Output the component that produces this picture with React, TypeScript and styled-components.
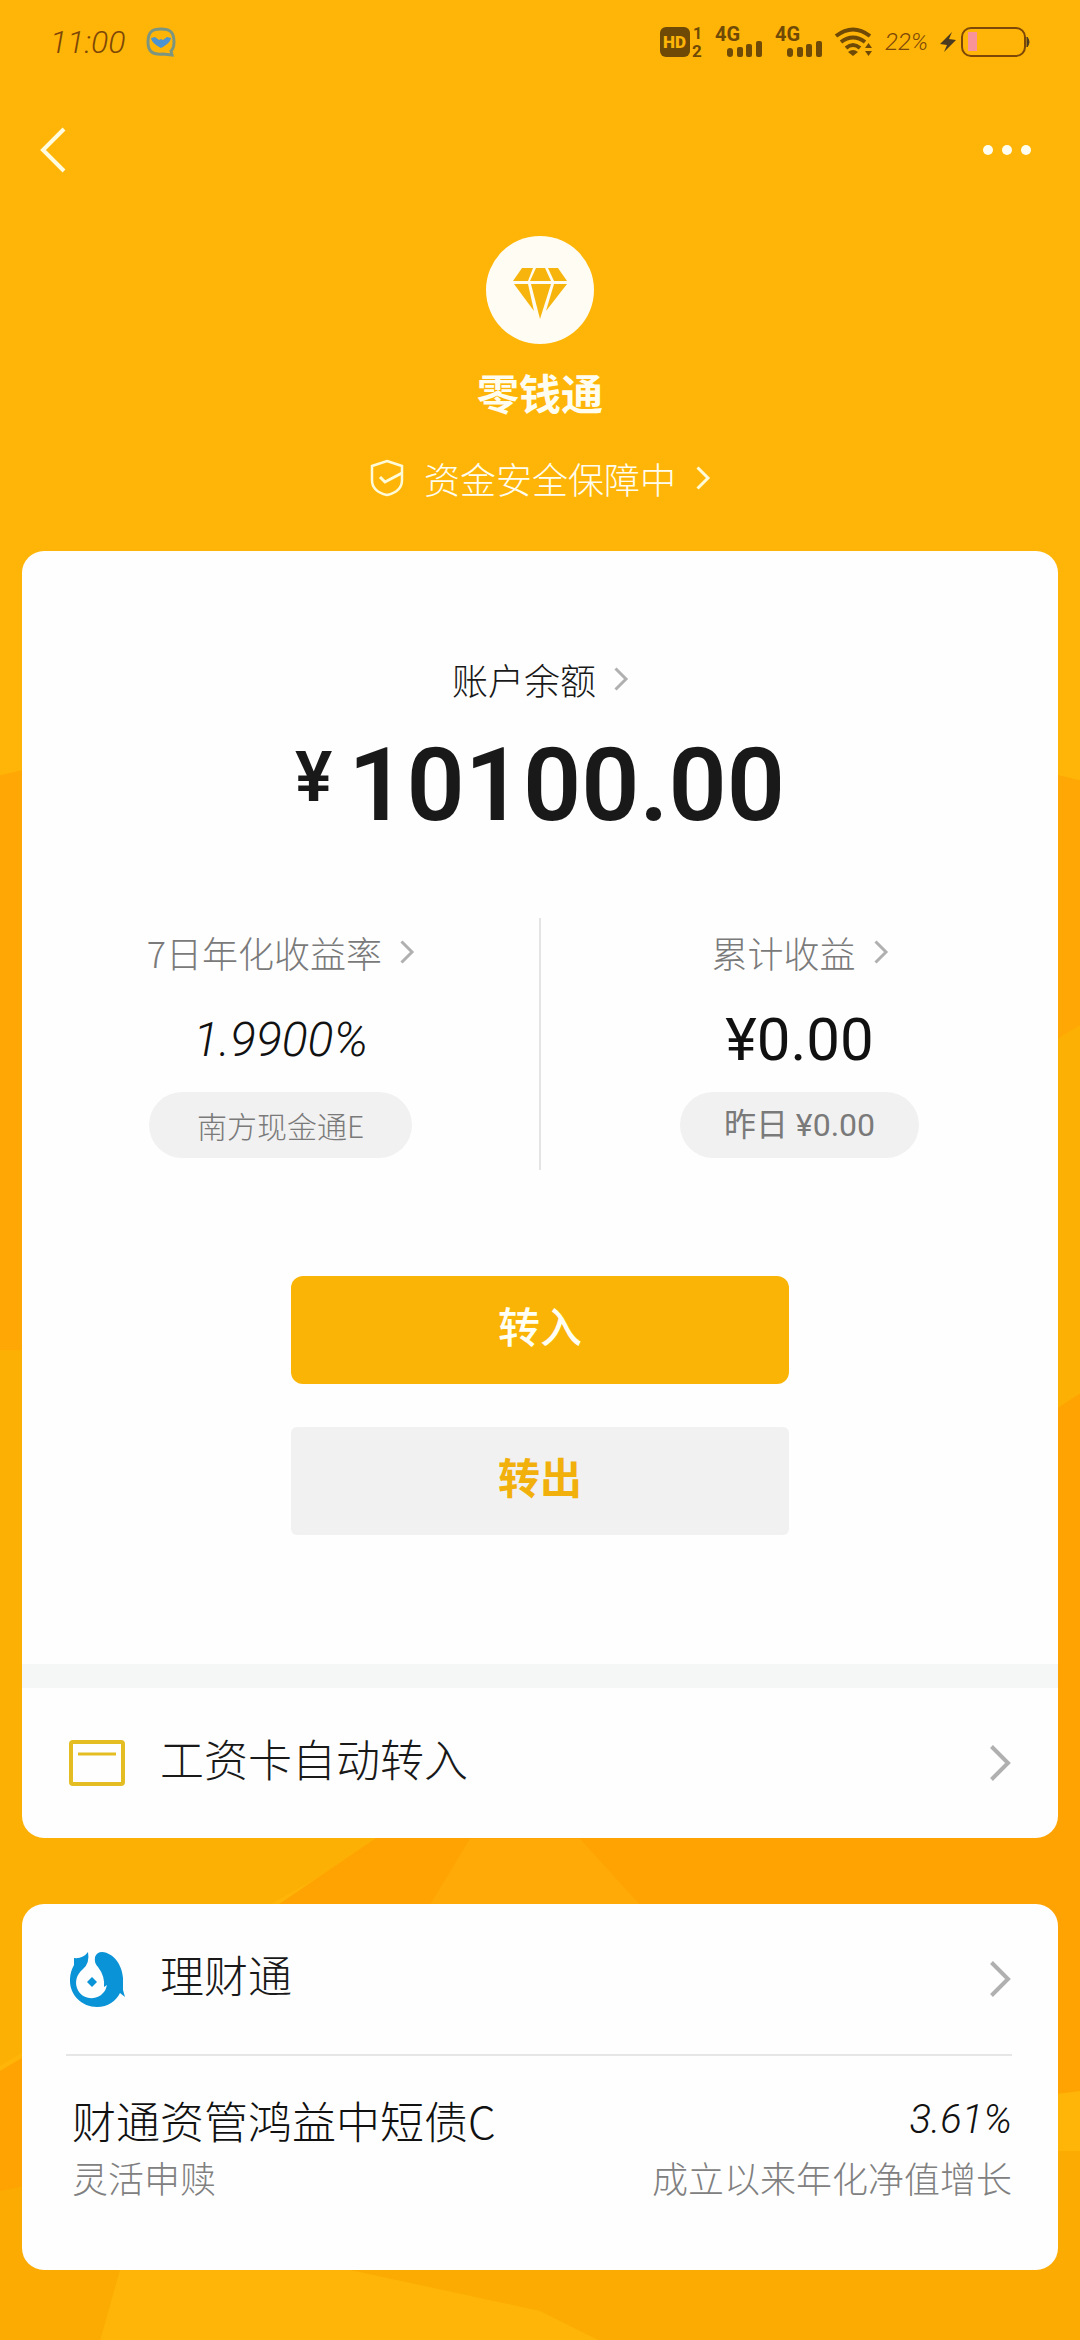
import React from 'react';
import styled, { createGlobalStyle } from 'styled-components';

const GlobalStyle = createGlobalStyle`
  * { box-sizing: border-box; }
  html { background: #ffb507; }
  body {
    margin: 0;
    font-family: Roboto, 'Noto Sans CJK SC', sans-serif;
    color: #191919;
  }
  h1, p { margin: 0; font-weight: inherit; }
  svg { display: block; flex: none; overflow: visible; }
`;

const han = "'Noto Sans CJK SC', sans-serif";
const ink = '#6f4a06';

const Page = styled.div`
  position: relative;
  isolation: isolate;
  min-height: 100vh;
  padding-bottom: 71px;
`;

const Backdrop = styled.svg`
  position: absolute;
  inset: 0;
  z-index: -1;
  width: 100%;
  height: 100%;
`;

const StatusBar = styled.div`
  display: flex;
  align-items: center;
  justify-content: space-between;
  height: 84px;
  padding: 0 50px;
`;

const StatusGroup = styled.div<{ $gap: number }>`
  display: flex;
  align-items: center;
  gap: ${(p) => p.$gap}px;
`;

const StatusText = styled.span<{ $size: number }>`
  font-size: ${(p) => p.$size}px;
  line-height: 40px;
  font-style: italic;
  font-weight: 300;
  color: #7d4708;
`;

const NavBar = styled.nav`
  display: flex;
  align-items: center;
  justify-content: space-between;
  height: 132px;
  padding: 0 48px 0 38px;
`;

const PlainButton = styled.button`
  display: flex;
  align-items: center;
  justify-content: center;
  border: 0;
  padding: 0;
  background: none;
  color: inherit;
  font: inherit;
  cursor: pointer;
`;

const Hero = styled.header`
  display: flex;
  flex-direction: column;
  align-items: center;
  padding: 20px 0 43px;
  color: #fffdf0;
`;

const Title = styled.h1`
  margin-top: 18px;
  font-family: ${han};
  font-size: 42px;
  line-height: 60px;
  font-weight: 700;
`;

const Security = styled(PlainButton)`
  gap: 20px;
  margin-top: 32px;
  font-family: ${han};
  font-size: 36px;
  line-height: 48px;
  font-weight: 300;
  padding-bottom: 6px;
`;

const Stack = styled.main`
  display: flex;
  flex-direction: column;
  gap: 66px;
  padding: 0 22px;
`;

const Card = styled.section`
  border-radius: 22px;
  background: #fefefe;
  overflow: hidden;
`;

const Summary = styled.div`
  display: flex;
  flex-direction: column;
  align-items: center;
  padding: 104px 0 129px;
`;

const Label = styled(PlainButton)<{ $muted?: boolean }>`
  gap: 18px;
  font-family: ${han};
  font-size: 36px;
  line-height: 48px;
  font-weight: 300;
  color: ${(p) => (p.$muted ? '#7a7a7a' : '#191919')};
`;

const Amount = styled.p`
  display: flex;
  align-items: flex-start;
  gap: 16px;
  margin-top: 24px;
  font-weight: 600;
  font-size: 102px;
  line-height: 116px;
`;

const Currency = styled.span`
  font-size: 70px;
  line-height: 100px;
`;

const Stats = styled.div`
  display: grid;
  grid-template-columns: 1fr 2px 1fr;
  width: 100%;
  margin-top: 75px;
`;

const Stat = styled.div`
  display: flex;
  flex-direction: column;
  align-items: center;
  padding: 10px 0 12px;
`;

const Rule = styled.div`
  background: #e4e4e4;
`;

const StatValue = styled.p<{ $slanted?: boolean }>`
  margin-top: 28px;
  line-height: 72px;
  font-size: ${(p) => (p.$slanted ? 48 : 60)}px;
  font-style: ${(p) => (p.$slanted ? 'italic' : 'normal')};
  font-weight: ${(p) => (p.$slanted ? 300 : 400)};
  color: #111;
`;

const Pill = styled.span<{ $fine?: boolean }>`
  margin-top: 16px;
  padding: 0 ${(p) => (p.$fine ? 48 : 44)}px;
  border-radius: 33px;
  background: #f1f1f1;
  color: #7a7a7a;
  font-family: ${(p) => (p.$fine ? han : "Roboto, 'Noto Sans CJK SC', sans-serif")};
  font-size: ${(p) => (p.$fine ? 30 : 32)}px;
  font-weight: ${(p) => (p.$fine ? 300 : 400)};
  line-height: 66px;
`;

const Actions = styled.div`
  display: flex;
  flex-direction: column;
  gap: 43px;
  width: 48%;
  margin-top: 106px;
`;

const Action = styled(PlainButton)<{ $primary?: boolean }>`
  height: 108px;
  padding-bottom: 12px;
  border-radius: ${(p) => (p.$primary ? 12 : 6)}px;
  background: ${(p) => (p.$primary ? '#fab405' : '#f1f1f1')};
  color: ${(p) => (p.$primary ? '#fffff4' : '#f2b00c')};
  font-family: ${han};
  font-size: 42px;
  font-weight: ${(p) => (p.$primary ? 500 : 700)};
`;

const Row = styled.a<{ $divided?: boolean }>`
  display: flex;
  align-items: center;
  gap: 34px;
  height: 150px;
  padding: 0 48px 0 46px;
  border-top: ${(p) => (p.$divided ? '24px solid #f5f6f6' : '0')};
  box-sizing: content-box;
  color: #191919;
  text-decoration: none;
`;

const RowText = styled.span`
  flex: 1;
  padding-bottom: 10px;
  font-family: ${han};
  font-size: 44px;
  line-height: 60px;
  font-weight: 300;
`;

const Fund = styled.div`
  display: grid;
  grid-template-columns: auto auto;
  justify-content: space-between;
  margin: 0 46px 0 44px;
  padding: 34px 0 66px;
  border-top: 2px solid #e6e6e6;
  font-family: ${han};
  font-weight: 300;
`;

const FundMain = styled.span<{ $slanted?: boolean }>`
  padding-left: 6px;
  font-family: ${(p) => (p.$slanted ? 'Roboto, sans-serif' : han)};
  font-size: ${(p) => (p.$slanted ? 40 : 44)}px;
  font-style: ${(p) => (p.$slanted ? 'italic' : 'normal')};
  line-height: 60px;
  text-align: ${(p) => (p.$slanted ? 'right' : 'left')};
  color: #111;
`;

const FundNote = styled.span`
  padding-left: 6px;
  font-size: 36px;
  line-height: 54px;
  color: #808080;
`;

const Chevron = ({ w = 14, h = 24, color = '#b0b0b0', stroke = 3 }: { w?: number; h?: number; color?: string; stroke?: number }) => (
  <svg width={w} height={h} viewBox={`0 0 ${w} ${h}`} fill="none" stroke={color} strokeWidth={stroke} aria-hidden="true">
    <path d={`M1.5 1.5L${w - 2} ${h / 2}L1.5 ${h - 1.5}`} />
  </svg>
);

const Signal = () => (
  <svg width="48" height="44" viewBox="0 -6 48 44" fill={ink} role="img" aria-label="4G">
    <text x="0" y="15" fontFamily="Roboto, sans-serif" fontWeight="700" fontSize="20">4G</text>
    <rect x="12" y="22" width="6" height="9" rx="3" />
    <rect x="22" y="21" width="6" height="10" rx="2" />
    <rect x="31" y="18" width="6" height="13" rx="2" />
    <rect x="41" y="15" width="6" height="16" rx="2" />
  </svg>
);

export default function App() {
  return (
    <>
      <GlobalStyle />
      <Page>
        <Backdrop viewBox="0 0 1080 2340" preserveAspectRatio="none" aria-hidden="true">
          <rect width="1080" height="2340" fill="#ffb507" />
          <path d="M0 775L540 650L1080 780V1025L540 1350H0z" fill="#ffa704" />
          <path d="M0 1350H540L1080 1025V1393L540 1750L270 1904L0 2065z" fill="#fdb004" />
          <path d="M375 1838L278 1904L0 2070V2190L540 2160L1080 2090V1393L540 1740z" fill="#ffa303" />
          <path d="M470 1838H580L640 1904H430z" fill="#ffaa07" />
          <path d="M0 2190L200 2150H1080V2340H0z" fill="#fcab02" />
          <path d="M120 2269H350L540 2310L600 2340H100z" fill="#ffb507" />
        </Backdrop>

        <StatusBar>
          <StatusGroup $gap={20}>
            <StatusText $size={32}>11:00</StatusText>
            <svg width="30" height="30" viewBox="0 0 30 30" fill="none" aria-hidden="true">
              <path d="M15 2C24 2 28 5 28 15C28 19 27 22 25 24L26 28L17 27C6 28 2 24 2 15C2 5 6 2 15 2z" stroke="#7c9580" strokeWidth="3" />
              <path d="M5 11L9 10L13 13L15 12L17 13L21 10L25 11C24 16 20 18 15 21C10 18 6 16 5 11z" fill="#4d93cf" />
            </svg>
          </StatusGroup>
          <StatusGroup $gap={12}>
            <svg width="43" height="44" viewBox="0 -6 43 44" fill={ink} role="img" aria-label="HD 1 2">
              <rect x="0" y="1" width="30" height="30" rx="6" />
              <text x="3" y="22" fontFamily="Roboto, sans-serif" fontWeight="900" fontSize="17" fill="#ffb507">HD</text>
              <text x="33" y="13" fontFamily="Roboto, sans-serif" fontWeight="700" fontSize="16">1</text>
              <text x="32" y="31" fontFamily="Roboto, sans-serif" fontWeight="700" fontSize="17">2</text>
            </svg>
            <Signal />
            <Signal />
            <svg width="38" height="30" viewBox="0 0 38 30" aria-hidden="true">
              <g fill="none" stroke={ink} strokeWidth="4">
                <path d="M1 9Q18 -4 35 9" />
                <path d="M6 15Q18 6 30 15" />
                <path d="M11 21Q18 15 25 21" />
              </g>
              <path d="M13 25Q18 21 23 25L18 29z" fill={ink} />
              <path d="M30 21L33.500 16L37 21zM30 24H37L33.500 29z" fill={ink} />
            </svg>
            <StatusText $size={24}>22%</StatusText>
            <svg width="90" height="32" viewBox="0 0 90 32" aria-hidden="true">
              <path d="M12 6L0 18L7 19L4 26L16 14L9 13z" fill="#4a3a20" />
              <rect x="22" y="2" width="63" height="28" rx="9" fill="none" stroke="#7d4708" strokeWidth="2" />
              <rect x="28" y="6" width="9" height="19" fill="#f8939a" />
              <path d="M87 11Q91 16 87 21z" fill="#4a3a20" stroke="#4a3a20" />
            </svg>
          </StatusGroup>
        </StatusBar>

        <NavBar>
          <PlainButton aria-label="返回">
            <svg width="28" height="46" viewBox="0 0 28 46" fill="none" stroke="#fffce0" strokeWidth="4">
              <path d="M26 2L5 23L26 44" />
            </svg>
          </PlainButton>
          <PlainButton aria-label="更多">
            <svg width="50" height="12" viewBox="0 0 50 12" fill="#fffef0">
              <circle cx="6" cy="6" r="5" />
              <circle cx="25" cy="6" r="5" />
              <circle cx="44" cy="6" r="5" />
            </svg>
          </PlainButton>
        </NavBar>

        <Hero>
          <svg width="108" height="108" viewBox="0 0 108 108" aria-hidden="true">
            <circle cx="54" cy="54" r="54" fill="#fffcf3" />
            <g fill="#f7b40c">
              <path d="M36 32H47L42 45H27z" />
              <path d="M50 32H59L65 45H44z" />
              <path d="M62 32H72L81 45H68z" />
              <path d="M28 48H42L48 75z" />
              <path d="M45 48H65L54 83z" />
              <path d="M68 48H81L60 75z" />
            </g>
          </svg>
          <Title>零钱通</Title>
          <Security>
            <svg width="34" height="38" viewBox="0 0 34 38" fill="none" stroke="#fffbd8" strokeWidth="2.500" aria-hidden="true">
              <path d="M17 2L32 7V21C32 29 26 34 17 36C8 34 2 29 2 21V7z" />
              <path d="M10 18L15 23L32 14" strokeWidth="3" />
            </svg>
            <span>资金安全保障中</span>
            <Chevron color="#fffbd8" />
          </Security>
        </Hero>

        <Stack>
          <Card>
            <Summary>
              <Label>
                账户余额
                <Chevron />
              </Label>
              <Amount>
                <Currency>¥</Currency>
                <span>10100.00</span>
              </Amount>
              <Stats>
                <Stat>
                  <Label $muted>
                    7日年化收益率
                    <Chevron />
                  </Label>
                  <StatValue $slanted>1.9900%</StatValue>
                  <Pill $fine>南方现金通E</Pill>
                </Stat>
                <Rule />
                <Stat>
                  <Label $muted>
                    累计收益
                    <Chevron />
                  </Label>
                  <StatValue>¥0.00</StatValue>
                  <Pill>昨日 ¥0.00</Pill>
                </Stat>
              </Stats>
              <Actions>
                <Action $primary>转入</Action>
                <Action>转出</Action>
              </Actions>
            </Summary>
            <Row href="#salary" $divided>
              <svg width="58" height="46" viewBox="0 0 58 46" fill="none" stroke="#e3bd22" strokeWidth="4" aria-hidden="true">
                <rect x="3" y="2" width="52" height="42" rx="2" />
                <path d="M10 14H48" strokeWidth="3" />
              </svg>
              <RowText>工资卡自动转入</RowText>
              <Chevron w={20} h={36} stroke={4} />
            </Row>
          </Card>

          <Card>
            <Row href="#licaitong">
              <svg width="58" height="56" viewBox="0 0 58 56" aria-hidden="true">
                <path
                  d="M6 7Q15 8 20 1Q22 12 15 18C8 24 7 31 9 37C13 49 29 50 35 42C38 39 38 37 39 34L36 36Q37 25 30 16Q26 12 27 6Q29 1 34 1C46 2 54 14 55 27V39L57 46L52 42C48 50 40 56 29 56C14 56 2 44 2 30C2 22 4 18 6 14z"
                  fill="#0a93d6"
                />
                <path d="M24 26L29 31L24 36L19 31z" fill="#0a93d6" />
              </svg>
              <RowText>理财通</RowText>
              <Chevron w={20} h={36} stroke={4} />
            </Row>
            <Fund>
              <FundMain>财通资管鸿益中短债C</FundMain>
              <FundMain $slanted>3.61%</FundMain>
              <FundNote>灵活申赎</FundNote>
              <FundNote>成立以来年化净值增长</FundNote>
            </Fund>
          </Card>
        </Stack>
      </Page>
    </>
  );
}
